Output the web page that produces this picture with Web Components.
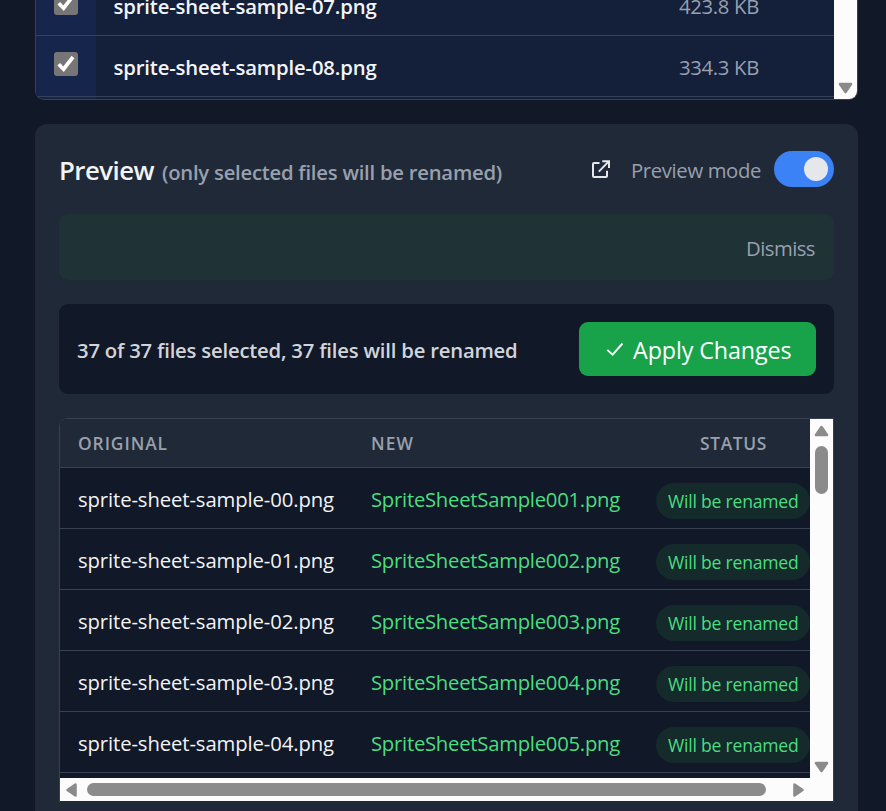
<!DOCTYPE html>
<html lang="en">
<head>
<meta charset="utf-8">
<title>File renamer</title>
<style>
  html, body { margin: 0; height: 811px; overflow: hidden; background: #111827; }
  body { font-family: "Open Sans", "Noto Sans", sans-serif; }
</style>
</head>
<body>
<rename-app></rename-app>
<script>
const define = (name, html, setup) => {
  const tpl = document.createElement('template');
  tpl.innerHTML = html;
  customElements.define(name, class extends HTMLElement {
    constructor() {
      super();
      this.attachShadow({ mode: 'open' }).append(tpl.content.cloneNode(true));
    }
    connectedCallback() { if (setup) setup(this, this.shadowRoot); }
  });
};

/* One line of text whose tracking is adjusted to fill the given width. */
define('fit-text', `
  <style>
    :host { display: block; white-space: nowrap; flex: none; }
    span { display: inline-block; white-space: nowrap; }
  </style><span><slot></slot></span>`, host => {
  const span = host.shadowRoot.querySelector('span');
  const w = +host.getAttribute('w');
  host.style.width = w + 'px';
  const n = host.textContent.length;
  const natural = span.getBoundingClientRect().width;
  if (n && natural) span.style.letterSpacing = ((w - natural) / n) + 'px';
});

define('scroll-arrow', `
  <style>
    :host { display: block; width: 15px; height: 12px; }
    :host([dir="down"]) { transform: rotate(180deg); }
    :host([dir="left"]) { transform: rotate(-90deg); }
    :host([dir="right"]) { transform: rotate(90deg); }
    svg { display: block; }
  </style>
  <svg width="15" height="12" viewBox="0 0 15 12"><path d="M7.5 2 L13 10 H2 Z" fill="#8b8b8b" stroke="#8b8b8b" stroke-width="2.6" stroke-linejoin="round"/></svg>`);

define('check-box', `
  <style>
    :host { display: block; width: 24px; height: 24px; border-radius: 3px; background: #767676; }
    svg { display: block; }
  </style>
  <svg width="24" height="24" viewBox="0 0 24 24"><path d="M4.7 12.2 L9.6 17.2 L19 5" fill="none" stroke="#fff" stroke-width="3.7"/></svg>`);

define('file-row', `
  <style>
    :host { display: flex; height: 60px; border-bottom: 1px solid #364258; background: #141f3a; flex: none; }
    .check { width: 60px; background: #16254c; padding: 16px 18px; box-sizing: border-box; flex: none; }
    .name { padding: 16px 0 0 17.5px; width: 583px; box-sizing: border-box; color: #f3f4f6; font: 600 20.3px/30px "Open Sans", sans-serif; flex: none; }
    .size { padding-top: 16px; color: #98a0af; font: 20.3px/30px "Open Sans", sans-serif; }
  </style>
  <div class="check"><check-box></check-box></div>
  <div class="name"><slot name="name"></slot></div>
  <div class="size"><slot></slot></div>`);

define('file-panel', `
  <style>
    :host { display: flex; height: 100px; box-sizing: border-box; border: 1px solid #364152; border-top: 0; border-radius: 0 0 9px 9px; overflow: hidden; background: #141f3a; }
    .rows { flex: 1; display: flex; flex-direction: column; justify-content: flex-end; overflow: hidden; background: linear-gradient(90deg, #16254c 60px, #141f3a 60px); }
    .pad { height: 2px; flex: none; }
    .bar { width: 23px; background: #fcfcfc; display: flex; flex-direction: column; justify-content: flex-end; align-items: center; padding-bottom: 5px; box-sizing: border-box; }
  </style>
  <div class="rows"><slot></slot><div class="pad"></div></div>
  <div class="bar"><scroll-arrow dir="down"></scroll-arrow></div>`);

define('toggle-switch', `
  <style>
    :host { display: flex; justify-content: flex-end; width: 60px; height: 36px; padding: 6px; box-sizing: border-box; border-radius: 18px; background: #3b82f6; }
    i { width: 24px; height: 24px; border-radius: 50%; background: #e5e7eb; }
  </style><i></i>`);

define('preview-header', `
  <style>
    :host { display: flex; height: 36px; align-items: flex-start; }
    .title { color: #f3f4f6; font: 600 25.8px/36px "Open Sans", sans-serif; padding-top: 1px; }
    .sub { color: #98a0ae; font: 600 20.3px/36px "Open Sans", sans-serif; padding: 3px 0 0 8px; flex: 1; }
    svg { display: block; margin: 8px 19px 0 0; }
    .mode { color: #98a0ae; font: 20.3px/36px "Open Sans", sans-serif; padding: 1px 13px 0 0; }
  </style>
  <div class="title"><fit-text w="95">Preview</fit-text></div>
  <div class="sub"><fit-text w="340">(only selected files will be renamed)</fit-text></div>
  <svg width="22" height="22" viewBox="0 0 22 22" fill="none" stroke="#e5e7eb" stroke-width="2"><path d="M9.5 4H4Q3 4 3 5V17Q3 18 4 18H16Q17 18 17 17V11.8M12.3 2.2H19V9M18.8 2.4L8.8 12.6"/></svg>
  <div class="mode"><fit-text w="130">Preview mode</fit-text></div>
  <toggle-switch></toggle-switch>`);

define('notice-bar', `
  <style>
    :host { display: flex; justify-content: flex-end; height: 66px; margin-top: 27px; padding: 19px 19px 0; box-sizing: border-box; border-radius: 9px; background: #1f3236; color: #98a0ae; font: 20.3px/30px "Open Sans", sans-serif; }
  </style><slot></slot>`);

define('apply-button', `
  <style>
    :host { display: flex; width: 237px; height: 54px; box-sizing: border-box; padding: 0 0 0 25px; border-radius: 9px; background: #18a34a; color: #fff; font: 23.3px/56px "Open Sans", sans-serif; }
    svg { margin: 18px 7px 0 0; flex: none; }
  </style>
  <svg width="22" height="20" viewBox="0 0 22 20"><path d="M3.3 9.9L8.6 14.6L18.5 3.5" fill="none" stroke="#fff" stroke-width="1.9"/></svg><slot></slot>`);

define('summary-bar', `
  <style>
    :host { display: flex; justify-content: space-between; align-items: center; height: 90px; margin-top: 24px; padding: 0 18px; box-sizing: border-box; border-radius: 9px; background: #111827; color: #d1d5db; font: 600 20.3px/30px "Open Sans", sans-serif; }
    .text { padding-top: 1px; }
  </style>
  <div class="text"><fit-text w="440.5">37 of 37 files selected, 37 files will be renamed</fit-text></div>
  <apply-button><fit-text w="158.5">Apply Changes</fit-text></apply-button>`);

define('preview-row', `
  <style>
    :host { display: grid; grid-template-columns: 293px 285px 154px; height: 60px; padding-left: 18px; border-bottom: 1px solid #374151; font: 20.3px/30px "Open Sans", sans-serif; color: #f3f4f6; flex: none; }
    .cell { padding-top: 16px; }
    .new { color: #4ade80; }
    .pill { margin-top: 15px; height: 36px; box-sizing: border-box; padding-left: 12px; border-radius: 18px; background: #142a2b; color: #4ade80; font-size: 17.6px; line-height: 37px; }
  </style>
  <div class="cell"><slot name="old"></slot></div>
  <div class="cell new"><slot name="new"></slot></div>
  <div class="pill"><fit-text w="130.5">Will be renamed</fit-text></div>`);

define('preview-table', `
  <style>
    :host { display: grid; grid-template: 359px 23px / 750px 23px; height: 384px; box-sizing: border-box; border: 1px solid #374151; border-bottom: 0; margin-top: 24px; border-radius: 9px 0 0 0; overflow: hidden; }
    .view { overflow: hidden; background: #111827; display: flex; flex-direction: column; }
    .head { display: grid; grid-template-columns: 293px 329px 110px; height: 48px; flex: none; padding-left: 18px; border-bottom: 1px solid #374151; background: #202937; color: #98a0ae; font: 600 17.4px/49px "Open Sans", sans-serif; }
    .v { background: #fcfcfc; display: flex; flex-direction: column; align-items: center; padding-top: 6px; box-sizing: border-box; height: 359px; }
    .v i { width: 13px; height: 48px; border-radius: 7px; background: #8b8b8b; margin-top: 9px; }
    .v .end { margin: auto 0 5px; }
    .h { grid-column: 1 / 3; background: #fcfcfc; display: flex; align-items: center; padding-left: 4px; }
    .h i { width: 679px; height: 13px; border-radius: 7px; background: #8b8b8b; margin: 0 25px 0 8px; }
  </style>
  <div class="view">
    <div class="head"><fit-text w="90">ORIGINAL</fit-text><fit-text w="43">NEW</fit-text><fit-text w="67">STATUS</fit-text></div>
    <slot></slot>
  </div>
  <div class="v"><scroll-arrow></scroll-arrow><i></i><scroll-arrow class="end" dir="down"></scroll-arrow></div>
  <div class="h"><scroll-arrow dir="left"></scroll-arrow><i></i><scroll-arrow dir="right"></scroll-arrow></div>`);

define('preview-card', `
  <style>
    :host { display: block; margin-top: 24px; height: 720px; box-sizing: border-box; padding: 27px 24px 0; border-radius: 12px; background: #202937; }
  </style><slot></slot>`);

const rows = [0, 1, 2, 3, 4].map(i => `
  <preview-row><fit-text slot="old" w="256">sprite-sheet-sample-0${i}.png</fit-text><fit-text slot="new" w="249">SpriteSheetSample00${i + 1}.png</fit-text></preview-row>`).join('');

define('rename-app', `
  <style>
    :host { display: block; width: 823px; height: 811px; margin-left: 35px; overflow: hidden; }
  </style>
  <file-panel>
    <file-row><fit-text slot="name" w="263">sprite-sheet-sample-07.png</fit-text><fit-text w="80">423.8 KB</fit-text></file-row>
    <file-row><fit-text slot="name" w="263">sprite-sheet-sample-08.png</fit-text><fit-text w="80">334.3 KB</fit-text></file-row>
  </file-panel>
  <preview-card>
    <preview-header></preview-header>
    <notice-bar><fit-text w="69">Dismiss</fit-text></notice-bar>
    <summary-bar></summary-bar>
    <preview-table>${rows}</preview-table>
  </preview-card>`);
</script>
</body>
</html>
